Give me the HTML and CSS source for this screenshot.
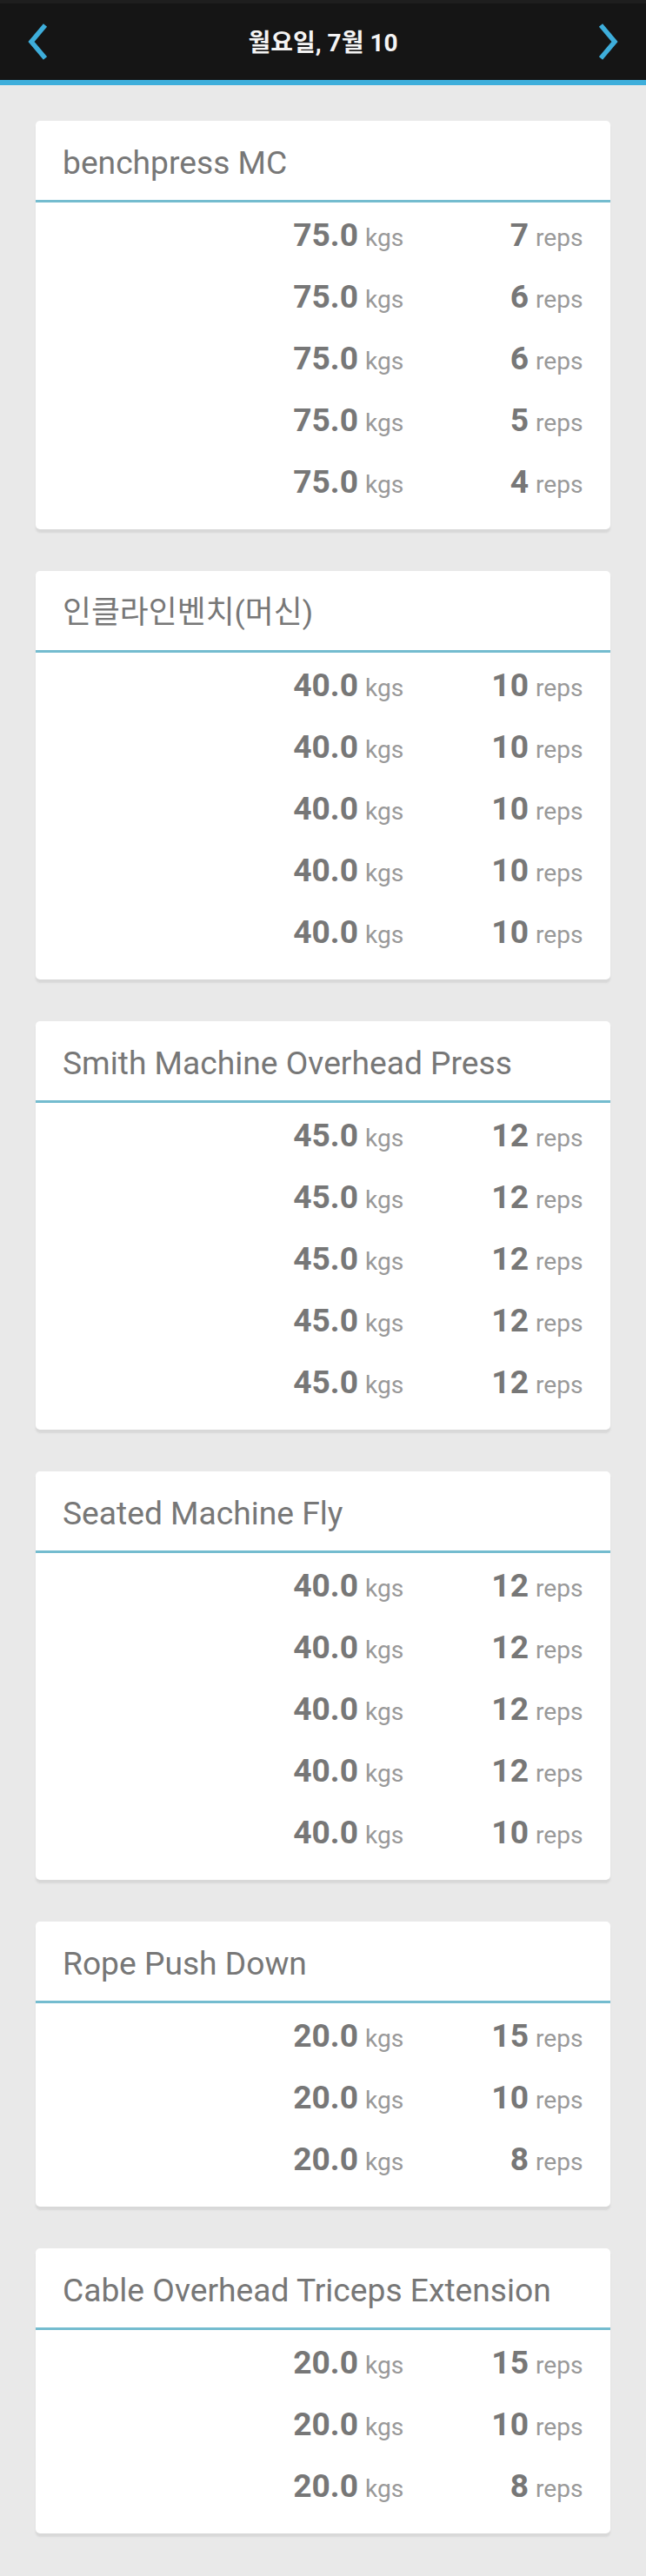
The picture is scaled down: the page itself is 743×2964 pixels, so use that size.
FILE: index.html
```html
<!DOCTYPE html>
<html lang="ko">
  <head>
    <meta charset="UTF-8" />
    <meta name="viewport" content="width=device-width, initial-scale=1.0" />
    <title>월요일, 7월 10</title>
    <link rel="stylesheet" href="styles.css" />
  </head>
  <body>
    <header class="header">
      <button class="arrow">
        <svg width="24" height="44" viewBox="0 0 24 44">
          <path d="M21 3 L5 22 L21 41" />
        </svg>
      </button>
      <h1 class="date">월요일, 7월 10</h1>
      <button class="arrow">
        <svg width="24" height="44" viewBox="0 0 24 44">
          <path d="M3 3 L19 22 L3 41" />
        </svg>
      </button>
    </header>
    <main class="list">
      <section class="card">
        <h2 class="title">benchpress MC</h2>
        <ul class="sets">
          <li class="set"><b>75.0</b><span class="unit kgs">kgs</span><b>7</b><span class="unit">reps</span></li>
          <li class="set"><b>75.0</b><span class="unit kgs">kgs</span><b>6</b><span class="unit">reps</span></li>
          <li class="set"><b>75.0</b><span class="unit kgs">kgs</span><b>6</b><span class="unit">reps</span></li>
          <li class="set"><b>75.0</b><span class="unit kgs">kgs</span><b>5</b><span class="unit">reps</span></li>
          <li class="set"><b>75.0</b><span class="unit kgs">kgs</span><b>4</b><span class="unit">reps</span></li>
        </ul>
      </section>
      <section class="card">
        <h2 class="title title-ko">인클라인벤치(머신)</h2>
        <ul class="sets">
          <li class="set"><b>40.0</b><span class="unit kgs">kgs</span><b>10</b><span class="unit">reps</span></li>
          <li class="set"><b>40.0</b><span class="unit kgs">kgs</span><b>10</b><span class="unit">reps</span></li>
          <li class="set"><b>40.0</b><span class="unit kgs">kgs</span><b>10</b><span class="unit">reps</span></li>
          <li class="set"><b>40.0</b><span class="unit kgs">kgs</span><b>10</b><span class="unit">reps</span></li>
          <li class="set"><b>40.0</b><span class="unit kgs">kgs</span><b>10</b><span class="unit">reps</span></li>
        </ul>
      </section>
      <section class="card">
        <h2 class="title">Smith Machine Overhead Press</h2>
        <ul class="sets">
          <li class="set"><b>45.0</b><span class="unit kgs">kgs</span><b>12</b><span class="unit">reps</span></li>
          <li class="set"><b>45.0</b><span class="unit kgs">kgs</span><b>12</b><span class="unit">reps</span></li>
          <li class="set"><b>45.0</b><span class="unit kgs">kgs</span><b>12</b><span class="unit">reps</span></li>
          <li class="set"><b>45.0</b><span class="unit kgs">kgs</span><b>12</b><span class="unit">reps</span></li>
          <li class="set"><b>45.0</b><span class="unit kgs">kgs</span><b>12</b><span class="unit">reps</span></li>
        </ul>
      </section>
      <section class="card">
        <h2 class="title">Seated Machine Fly</h2>
        <ul class="sets">
          <li class="set"><b>40.0</b><span class="unit kgs">kgs</span><b>12</b><span class="unit">reps</span></li>
          <li class="set"><b>40.0</b><span class="unit kgs">kgs</span><b>12</b><span class="unit">reps</span></li>
          <li class="set"><b>40.0</b><span class="unit kgs">kgs</span><b>12</b><span class="unit">reps</span></li>
          <li class="set"><b>40.0</b><span class="unit kgs">kgs</span><b>12</b><span class="unit">reps</span></li>
          <li class="set"><b>40.0</b><span class="unit kgs">kgs</span><b>10</b><span class="unit">reps</span></li>
        </ul>
      </section>
      <section class="card">
        <h2 class="title">Rope Push Down</h2>
        <ul class="sets">
          <li class="set"><b>20.0</b><span class="unit kgs">kgs</span><b>15</b><span class="unit">reps</span></li>
          <li class="set"><b>20.0</b><span class="unit kgs">kgs</span><b>10</b><span class="unit">reps</span></li>
          <li class="set"><b>20.0</b><span class="unit kgs">kgs</span><b>8</b><span class="unit">reps</span></li>
        </ul>
      </section>
      <section class="card">
        <h2 class="title">Cable Overhead Triceps Extension</h2>
        <ul class="sets">
          <li class="set"><b>20.0</b><span class="unit kgs">kgs</span><b>15</b><span class="unit">reps</span></li>
          <li class="set"><b>20.0</b><span class="unit kgs">kgs</span><b>10</b><span class="unit">reps</span></li>
          <li class="set"><b>20.0</b><span class="unit kgs">kgs</span><b>8</b><span class="unit">reps</span></li>
        </ul>
      </section>
    </main>
  </body>
</html>
```
FILE: styles.css
```css
* {
  margin: 0;
  padding: 0;
  box-sizing: border-box;
}
ul {
  list-style: none;
}
body {
  min-height: 2964px;
  background-color: #e9e9e9;
  font-family: Roboto, "Noto Sans CJK KR", sans-serif;
  color: #777;
}
.header {
  display: flex;
  justify-content: space-between;
  align-items: center;
  height: 98px;
  padding: 0 31px;
  border-top: 4px solid #1e1e1e;
  border-bottom: 6px solid #3eaedb;
  background-color: #151515;
}
.arrow {
  width: 24px;
  height: 44px;
  border: none;
  background: none;
  cursor: pointer;
}
.arrow svg {
  display: block;
  fill: none;
  stroke: #3eaedb;
  stroke-width: 5.5;
}
.date {
  padding-top: 3px;
  font-size: 28px;
  font-weight: 700;
  line-height: 40px;
  color: #f4f4f4;
}
.list {
  display: flex;
  flex-direction: column;
  gap: 48.5px;
  padding: 41px 41px 48px;
}
.card {
  padding-bottom: 21px;
  border-radius: 5px;
  background-color: #fff;
  box-shadow: 0 4px 2px #d8d8d8;
}
.title {
  height: 93.5px;
  padding-left: 31px;
  border-bottom: 3px solid #74bccf;
  font-size: 37.2px;
  font-weight: 400;
  line-height: 96px;
}
.title-ko {
  font-size: 35.8px;
}
.set {
  display: flex;
  justify-content: flex-end;
  align-items: baseline;
  height: 71px;
  padding-right: 32px;
  line-height: 75px;
}
.set b {
  font-size: 37.2px;
  font-weight: 700;
}
.unit {
  width: 62px;
  padding-left: 8px;
  font-size: 28.2px;
  color: #999;
}
.kgs {
  width: 144px;
}
.kgs + b {
  width: 52px;
  text-align: right;
}
```
